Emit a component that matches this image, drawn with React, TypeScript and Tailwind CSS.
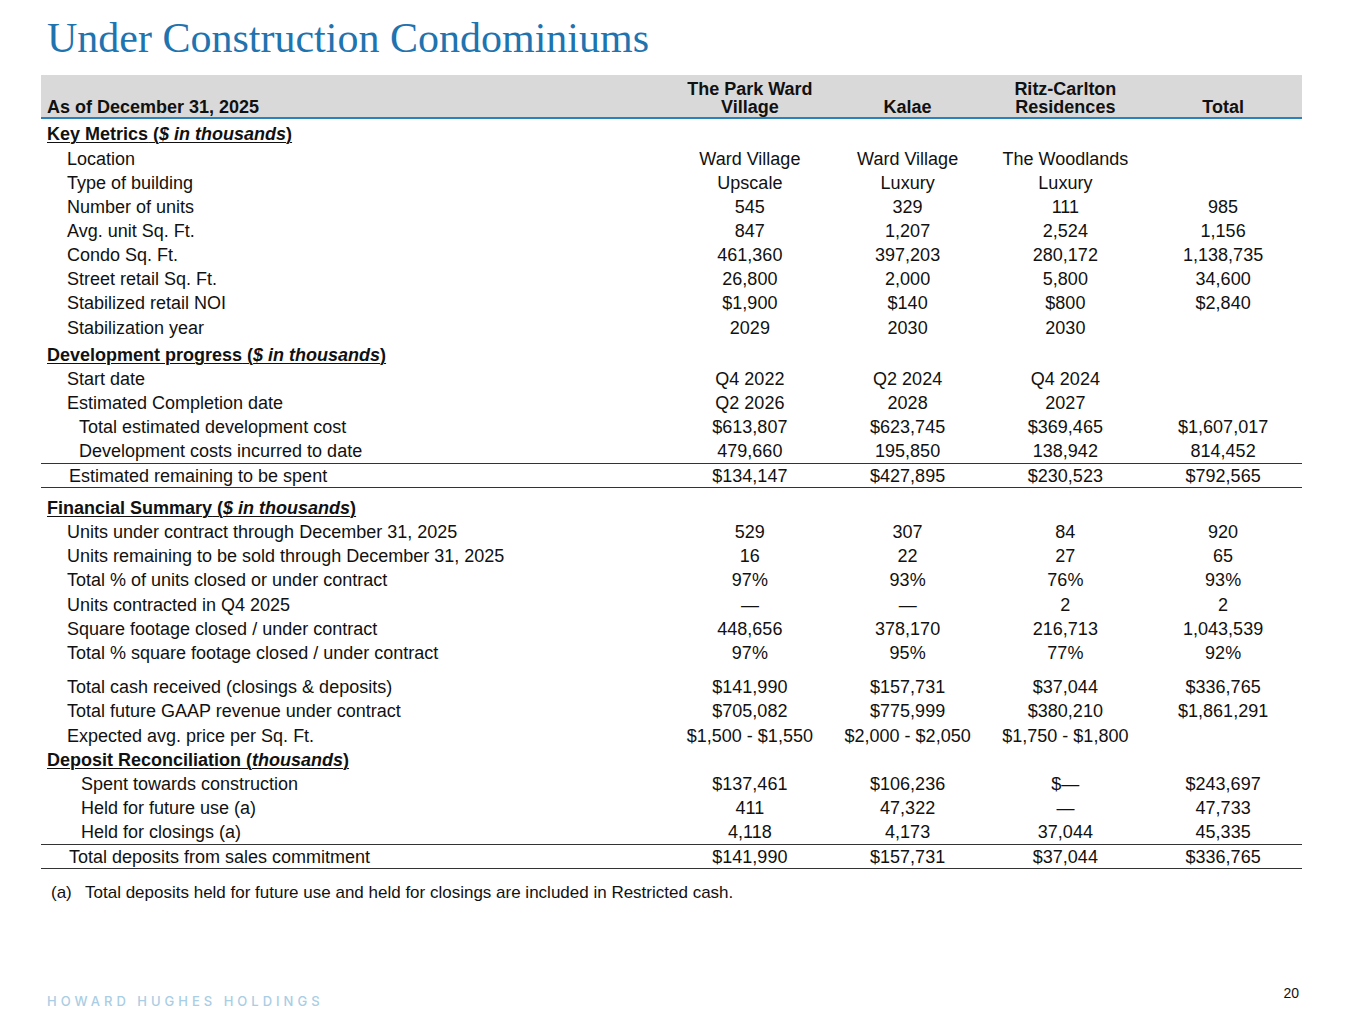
import React from 'react'

type Row =
  | { kind: 'section'; title: string; note: string; gap?: string }
  | { kind: 'row'; label: string; values: string[]; indent: string; gap?: string; ruled?: boolean }

const rows: Row[] = [
  { kind: 'section', title: 'Key Metrics', note: '$ in thousands', gap: 'mt-[3px]' },
  { kind: 'row', label: 'Location', values: ['Ward Village', 'Ward Village', 'The Woodlands', ''], indent: 'pl-[26px]', gap: 'mt-px' },
  { kind: 'row', label: 'Type of building', values: ['Upscale', 'Luxury', 'Luxury', ''], indent: 'pl-[26px]' },
  { kind: 'row', label: 'Number of units', values: ['545', '329', '111', '985'], indent: 'pl-[26px]' },
  { kind: 'row', label: 'Avg. unit Sq. Ft.', values: ['847', '1,207', '2,524', '1,156'], indent: 'pl-[26px]' },
  { kind: 'row', label: 'Condo Sq. Ft.', values: ['461,360', '397,203', '280,172', '1,138,735'], indent: 'pl-[26px]' },
  { kind: 'row', label: 'Street retail Sq. Ft.', values: ['26,800', '2,000', '5,800', '34,600'], indent: 'pl-[26px]' },
  { kind: 'row', label: 'Stabilized retail NOI', values: ['$1,900', '$140', '$800', '$2,840'], indent: 'pl-[26px]' },
  { kind: 'row', label: 'Stabilization year', values: ['2029', '2030', '2030', ''], indent: 'pl-[26px]', gap: 'mt-px' },
  { kind: 'section', title: 'Development progress', note: '$ in thousands', gap: 'mt-[3px]' },
  { kind: 'row', label: 'Start date', values: ['Q4 2022', 'Q2 2024', 'Q4 2024', ''], indent: 'pl-[26px]' },
  { kind: 'row', label: 'Estimated Completion date', values: ['Q2 2026', '2028', '2027', ''], indent: 'pl-[26px]' },
  { kind: 'row', label: 'Total estimated development cost', values: ['$613,807', '$623,745', '$369,465', '$1,607,017'], indent: 'pl-[38px]' },
  { kind: 'row', label: 'Development costs incurred to date', values: ['479,660', '195,850', '138,942', '814,452'], indent: 'pl-[38px]' },
  { kind: 'row', label: 'Estimated remaining to be spent', values: ['$134,147', '$427,895', '$230,523', '$792,565'], indent: 'pl-[28px]', ruled: true },
  { kind: 'section', title: 'Financial Summary', note: '$ in thousands', gap: 'mt-[8px]' },
  { kind: 'row', label: 'Units under contract through December 31, 2025', values: ['529', '307', '84', '920'], indent: 'pl-[26px]' },
  { kind: 'row', label: 'Units remaining to be sold through December 31, 2025', values: ['16', '22', '27', '65'], indent: 'pl-[26px]' },
  { kind: 'row', label: 'Total % of units closed or under contract', values: ['97%', '93%', '76%', '93%'], indent: 'pl-[26px]' },
  { kind: 'row', label: 'Units contracted in Q4 2025', values: ['—', '—', '2', '2'], indent: 'pl-[26px]', gap: 'mt-px' },
  { kind: 'row', label: 'Square footage closed / under contract', values: ['448,656', '378,170', '216,713', '1,043,539'], indent: 'pl-[26px]' },
  { kind: 'row', label: 'Total % square footage closed / under contract', values: ['97%', '95%', '77%', '92%'], indent: 'pl-[26px]' },
  { kind: 'row', label: 'Total cash received (closings & deposits)', values: ['$141,990', '$157,731', '$37,044', '$336,765'], indent: 'pl-[26px]', gap: 'mt-[10px]' },
  { kind: 'row', label: 'Total future GAAP revenue under contract', values: ['$705,082', '$775,999', '$380,210', '$1,861,291'], indent: 'pl-[26px]' },
  { kind: 'row', label: 'Expected avg. price per Sq. Ft.', values: ['$1,500 - $1,550', '$2,000 - $2,050', '$1,750 - $1,800', ''], indent: 'pl-[26px]', gap: 'mt-px' },
  { kind: 'section', title: 'Deposit Reconciliation', note: 'thousands' },
  { kind: 'row', label: 'Spent towards construction', values: ['$137,461', '$106,236', '$—', '$243,697'], indent: 'pl-[40px]' },
  { kind: 'row', label: 'Held for future use (a)', values: ['411', '47,322', '—', '47,733'], indent: 'pl-[40px]' },
  { kind: 'row', label: 'Held for closings (a)', values: ['4,118', '4,173', '37,044', '45,335'], indent: 'pl-[40px]' },
  { kind: 'row', label: 'Total deposits from sales commitment', values: ['$141,990', '$157,731', '$37,044', '$336,765'], indent: 'pl-[28px]', ruled: true },
]

const grid = 'grid grid-cols-[630px_repeat(4,minmax(0,1fr))]'

function SectionRow({ title, note, gap }: { title: string; note: string; gap?: string }) {
  return (
    <div className={`${grid} h-6 items-center ${gap ?? ''}`}>
      <div className="pl-[6px] font-bold underline underline-offset-2 decoration-1">
        {title} (<span className="italic">{note}</span>)
      </div>
    </div>
  )
}

function DataRow({ label, values, indent, gap, ruled }: { label: string; values: string[]; indent: string; gap?: string; ruled?: boolean }) {
  return (
    <div className={`${grid} items-center ${ruled ? 'h-[25px] border-y border-[#333]' : 'h-6'} ${gap ?? ''}`}>
      <div className={`${indent} whitespace-nowrap`}>{label}</div>
      {values.map((v, i) => (
        <div key={i} className="text-center whitespace-nowrap">{v}</div>
      ))}
    </div>
  )
}

export default function App() {
  return (
    <div className="w-[1365px] h-[1024px] bg-white flex flex-col text-[#111] font-['Liberation_Sans',Arial,sans-serif] text-[18px] leading-6">
      <h1 className="pt-[17px] pl-[47px] font-['Liberation_Serif','Times_New_Roman',serif] text-[42px] leading-[42px] text-[#1f74b0]">
        Under Construction Condominiums
      </h1>

      <div className="ml-[41px] w-[1261px] mt-[16px]">
        {/* Header band */}
        <div className={`${grid} h-[44px] items-end pb-px bg-[#d9d9d9] border-b-2 border-[#2a82bd] font-bold leading-[18px]`}>
          <div className="pl-[6px]">As of December 31, 2025</div>
          <div className="text-center">The Park Ward<br />Village</div>
          <div className="text-center">Kalae</div>
          <div className="text-center">Ritz-Carlton<br />Residences</div>
          <div className="text-center">Total</div>
        </div>

        {rows.map((r, i) =>
          r.kind === 'section' ? (
            <SectionRow key={i} title={r.title} note={r.note} gap={r.gap} />
          ) : (
            <DataRow key={i} label={r.label} values={r.values} indent={r.indent} gap={r.gap} ruled={r.ruled} />
          )
        )}

        {/* Footnote */}
        <div className="flex mt-[14px] pl-[10px] text-[17px] leading-5">
          <span className="w-[34px]">(a)</span>
          <span>Total deposits held for future use and held for closings are included in Restricted cash.</span>
        </div>
      </div>

      <div className="mt-auto flex items-end justify-between pl-[47px] pr-[66px] pb-[15px]">
        <div className="text-[13px] leading-4 font-medium tracking-[4px] text-[#a9cde4] font-['Inter','Liberation_Sans',sans-serif]">
          HOWARD HUGHES HOLDINGS
        </div>
        <div className="text-[14px] leading-4 mb-[8px]">20</div>
      </div>
    </div>
  )
}
